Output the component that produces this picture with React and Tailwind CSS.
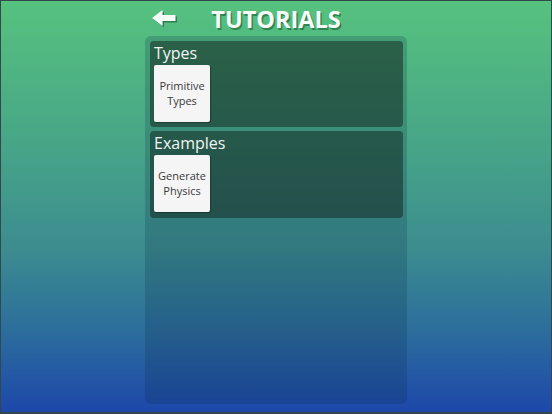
import React from "react";

function Card({ lines }) {
  return (
    <div className="w-[56px] h-[57px] bg-[#f5f5f5] rounded-[2px] shadow-[1px_1px_1px_rgba(0,0,0,0.3)] flex flex-col items-center justify-center text-[11px] leading-[14.5px] text-[#3a3a3a]">
      {lines.map((l) => (
        <span key={l}>{l}</span>
      ))}
    </div>
  );
}

function Section({ title, lines, h }) {
  return (
    <div className={`bg-[rgba(18,36,28,0.5)] rounded-[4px] pt-[1px] pb-[5px] pl-[4px] pr-[4px] ${h}`}>
      <div className="h-[20px] leading-[20px] text-[16px] text-[#f2f5f3] mb-[2px] mt-[1px]">{title}</div>
      <Card lines={lines} />
    </div>
  );
}

export default function App() {
  return (
    <div
      className="w-[552px] h-[414px] overflow-hidden border-x border-t border-b-2 border-[#34474d] bg-[linear-gradient(to_bottom,#56c27e_0%,#47a587_35%,#3c8d8f_60%,#2c6e9c_80%,#1d47aa_100%)] flex flex-col items-center"
      style={{ fontFamily: '"Open Sans", "Noto Sans", sans-serif' }}
    >
      <div className="w-[262px] h-[35px] relative flex items-center justify-center">
        <svg
          className="absolute left-[7px] top-[9px]"
          width="27"
          height="19"
          viewBox="0 0 27 19"
        >
          <polygon
            points="1.5,9.5 12,1.5 12,6.5 25,6.5 25,12.5 12,12.5 12,17.5"
            fill="rgba(20,70,45,0.55)"
          />
          <polygon
            points="0,8 10.5,0 10.5,5 23.5,5 23.5,11 10.5,11 10.5,16"
            fill="#f7fbf8"
          />
        </svg>
        <div className="text-[23.5px] font-bold leading-[30px] text-[#f6fbf7] [text-shadow:1.5px_1.5px_0_rgba(20,80,45,0.55)] mt-[1px]">
          TUTORIALS
        </div>
      </div>
      <div className="w-[262px] h-[368px] rounded-[6px] bg-[rgba(10,40,70,0.2)] pt-[5px] pl-[5px] pr-[4px] flex flex-col gap-[4px]">
        <Section title="Types" lines={["Primitive", "Types"]} h="h-[86px]" />
        <Section title="Examples" lines={["Generate", "Physics"]} h="h-[87px]" />
      </div>
    </div>
  );
}
